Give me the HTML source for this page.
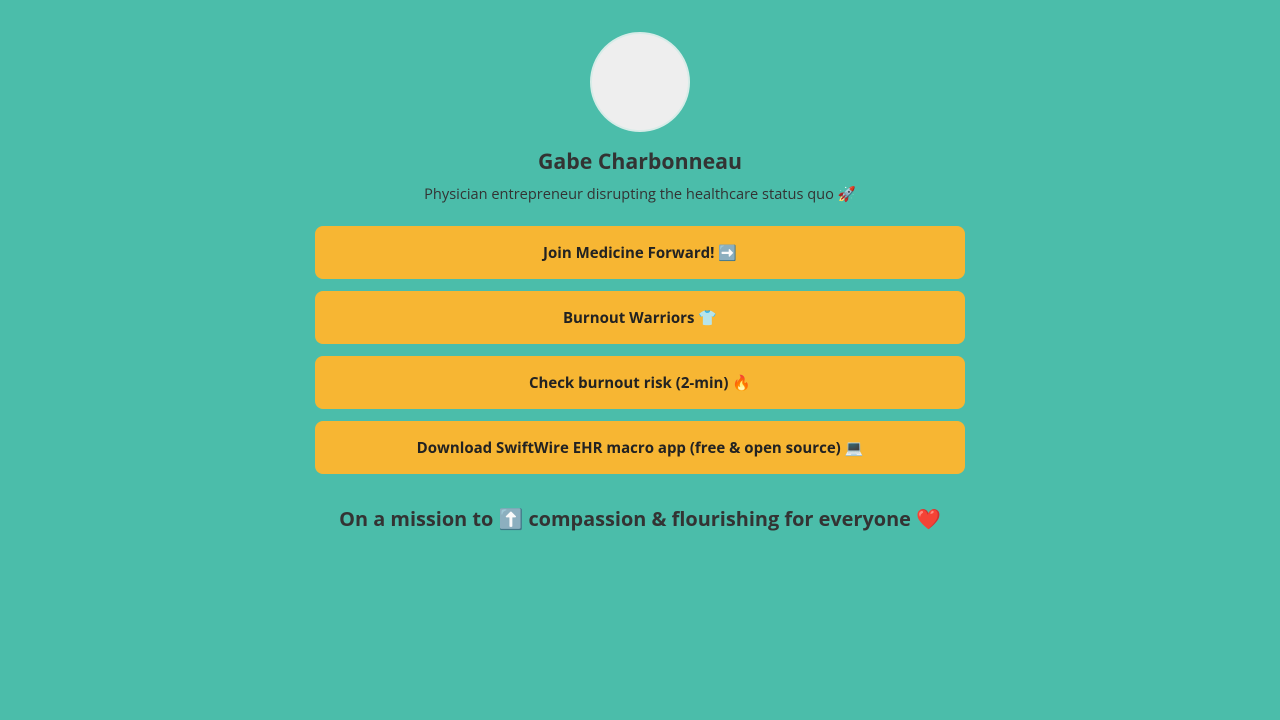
<!DOCTYPE html>
<html><head><meta charset="utf-8"><style>
body{margin:0;background:#4bbdaa;font-family:"Open Sans","Liberation Sans","DejaVu Sans",sans-serif;color:#333;width:1280px;height:720px;overflow:hidden}
.av{position:absolute;left:590px;top:32px;width:96px;height:96px;border-radius:50%;background:#eee;border:2px solid #d8ece8}
h1{position:absolute;top:148px;left:0;width:1280px;margin:0;text-align:center;font-size:21.3px;font-weight:bold;line-height:28px;color:#333}
.sub{position:absolute;top:184px;left:0;width:1280px;text-align:center;font-size:14.6px;line-height:20px;color:#333}
.b{position:absolute;left:315px;width:650px;height:53px;border-radius:8px;background:#f7b633;text-align:center;line-height:55px;font-weight:bold;font-size:15px;color:#222}
.m{position:absolute;top:505px;left:0;width:1280px;text-align:center;font-size:19.9px;font-weight:bold;line-height:28px;color:#333}
</style></head><body>
<div class="av"></div>
<h1>Gabe Charbonneau</h1>
<div class="sub">Physician entrepreneur disrupting the healthcare status quo 🚀</div>
<div class="b" style="top:226px">Join Medicine Forward! ➡️</div>
<div class="b" style="top:291px">Burnout Warriors 👕</div>
<div class="b" style="top:356px">Check burnout risk (2-min) 🔥</div>
<div class="b" style="top:421px">Download SwiftWire EHR macro app (free &amp; open source) 💻</div>
<div class="m">On a mission to ⬆️ compassion &amp; flourishing for everyone ❤️</div>
</body></html>
